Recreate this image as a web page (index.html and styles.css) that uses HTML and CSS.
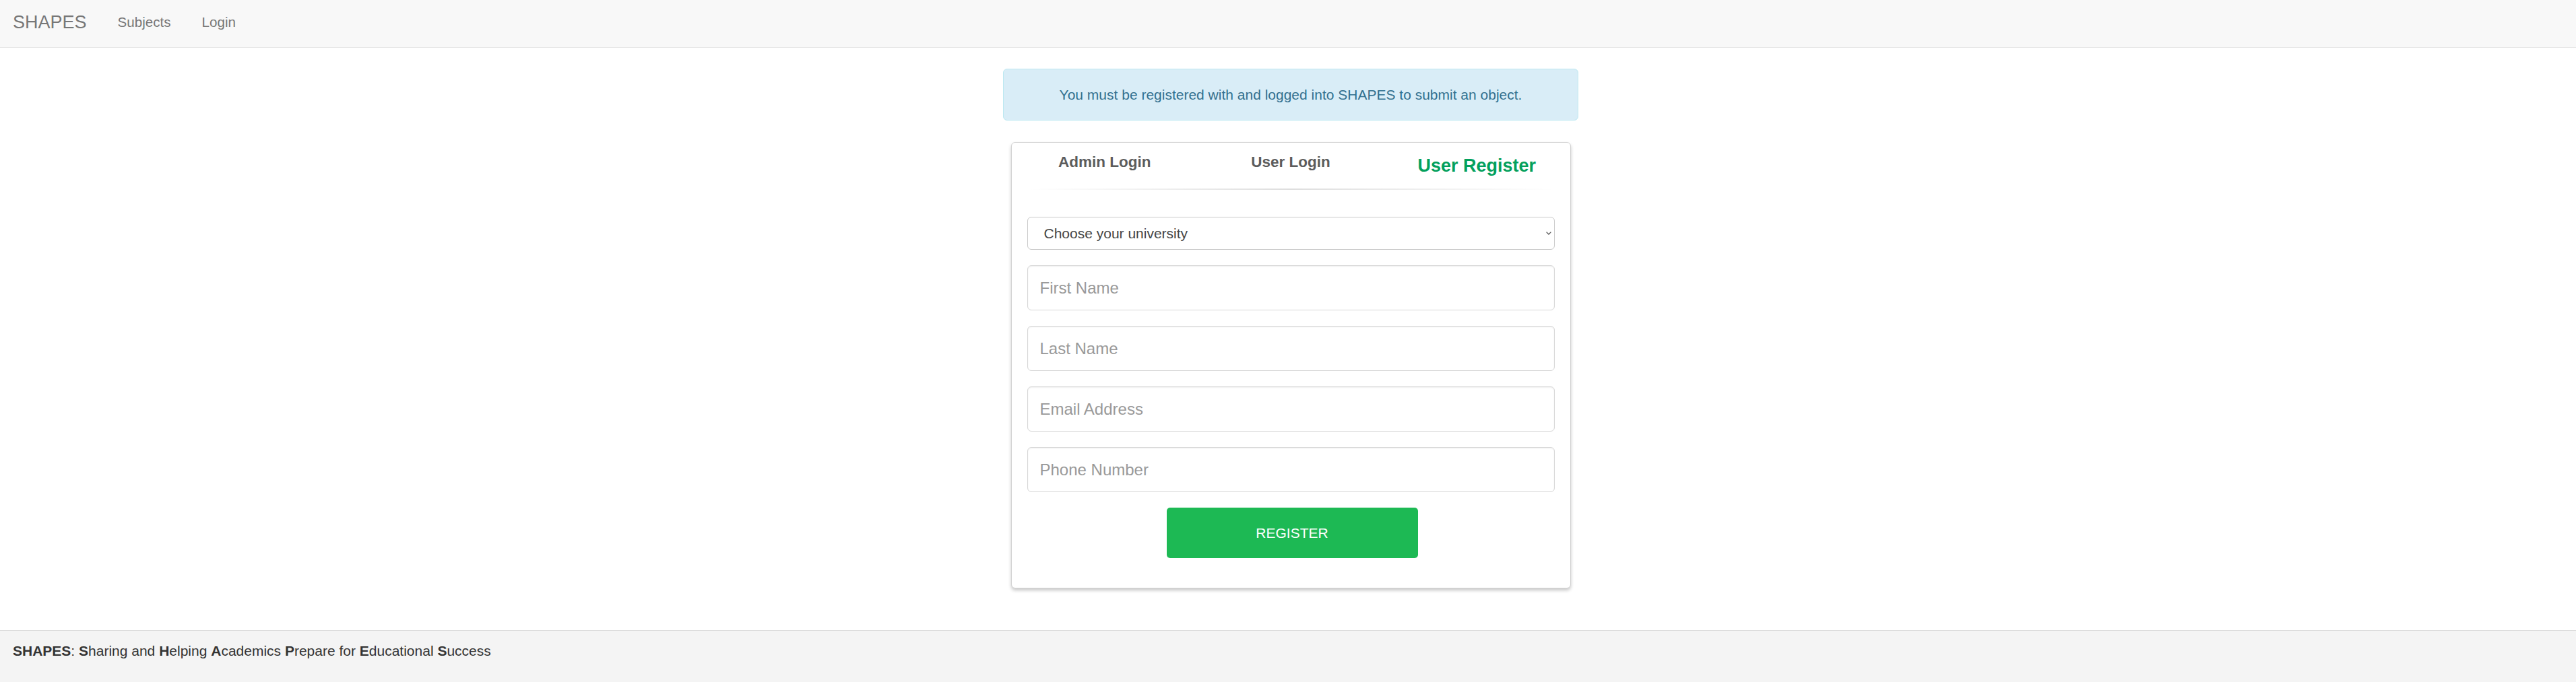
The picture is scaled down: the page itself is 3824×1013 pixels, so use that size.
FILE: index.html
```html
<!DOCTYPE html>
<html lang="en">
<head>
<meta charset="utf-8">
<title>SHAPES - Register</title>
<link rel="stylesheet" href="styles.css">
</head>
<body>
<nav class="navbar">
  <a class="brand" href="#">SHAPES</a>
  <a class="nav-link" href="#">Subjects</a>
  <a class="nav-link" href="#">Login</a>
</nav>
<main class="main">
  <div class="container">
    <div class="alert">You must be registered with and logged into SHAPES to submit an object.</div>
    <div class="card">
      <div class="tabs">
        <div class="tab">Admin Login</div>
        <div class="tab">User Login</div>
        <div class="tab tab-active">User Register</div>
      </div>
      <div class="divider"></div>
      <form class="form">
        <div class="select-wrap">
          <select class="select">
            <option>Choose your university</option>
          </select>
          <svg class="chevron" width="8" height="5" viewBox="0 0 8 5"><path d="M0.6 0.6 L4 4 L7.4 0.6" fill="none" stroke="#555" stroke-width="1.3"/></svg>
        </div>
        <input class="input" type="text" placeholder="First Name">
        <input class="input" type="text" placeholder="Last Name">
        <input class="input" type="email" placeholder="Email Address">
        <input class="input" type="tel" placeholder="Phone Number">
        <button class="btn" type="button">REGISTER</button>
      </form>
    </div>
  </div>
</main>
<footer class="footer">
  <p class="footer-text"><b>SHAPES</b>: <b>S</b>haring and <b>H</b>elping <b>A</b>cademics <b>P</b>repare for <b>E</b>ducational <b>S</b>uccess</p>
</footer>
</body>
</html>
```
FILE: styles.css
```css
html, body {
  margin: 0;
  padding: 0;
}
body {
  font-family: "Liberation Sans", Arial, Helvetica, sans-serif;
  color: #333;
  background: #fff;
  min-height: 100vh;
  display: flex;
  flex-direction: column;
}
.navbar {
  height: 70px;
  background: #f8f8f8;
  border-bottom: 1px solid #e7e7e7;
  display: flex;
  align-items: flex-start;
  gap: 46px;
  padding-left: 19px;
}
.brand {
  font-size: 27px;
  line-height: 66px;
  color: #777;
  text-decoration: none;
}
.nav-link {
  font-size: 20.6px;
  line-height: 66px;
  color: #777;
  text-decoration: none;
}
.main {
  flex: 1;
  padding: 31px 0 0 8px;
}
.container {
  width: 854px;
  margin: 0 auto;
}
.alert {
  height: 75px;
  box-sizing: content-box;
  background: #d9edf7;
  border: 1px solid #bce8f1;
  border-radius: 6px;
  color: #31708f;
  font-size: 21px;
  display: flex;
  align-items: center;
  justify-content: center;
}
.card {
  width: 829px;
  margin: 32px auto 0;
  background: #fff;
  border: 1px solid #d3d3d3;
  border-radius: 6px;
  box-shadow: 0 3px 5px rgba(0, 0, 0, 0.22);
}
.tabs {
  display: flex;
  align-items: flex-start;
  height: 50px;
}
.tab {
  flex: 1;
  text-align: center;
  font-weight: bold;
  font-size: 22.5px;
  line-height: 26px;
  padding-top: 16px;
  color: #5c5c5c;
}
.tab-active {
  font-size: 27px;
  line-height: 31px;
  padding-top: 19px;
  color: #03a05c;
}
.divider {
  height: 2px;
  margin: 18px 23px 0;
  background: linear-gradient(to right, rgba(0,0,0,0), rgba(0,0,0,0.13) 50%, rgba(0,0,0,0));
}
.form {
  display: flex;
  flex-direction: column;
  gap: 23px;
  padding: 40px 23px 44px;
}
.select-wrap {
  position: relative;
  height: 49px;
}
.select {
  appearance: none;
  -webkit-appearance: none;
  width: 100%;
  height: 49px;
  box-sizing: border-box;
  border: 1px solid #c9c9c9;
  border-radius: 6px;
  background: #fff;
  font-family: "Liberation Sans", Arial, Helvetica, sans-serif;
  font-size: 21px;
  color: #444;
  padding: 0 0 0 24px;
  margin: 0;
}
.chevron {
  position: absolute;
  right: 5px;
  top: 22px;
}
.input {
  height: 67px;
  box-sizing: border-box;
  border: 1px solid #d6d6d6;
  border-radius: 6px;
  box-shadow: inset 0 1px 2px rgba(0, 0, 0, 0.07);
  font-family: "Liberation Sans", Arial, Helvetica, sans-serif;
  font-size: 24px;
  padding: 0 18px;
  margin: 0;
  color: #555;
}
.input::placeholder {
  color: #999;
}
.btn {
  align-self: center;
  width: 373px;
  height: 75px;
  margin-left: 4px;
  border: none;
  border-radius: 5px;
  background: #1db954;
  color: #fff;
  font-family: "Liberation Sans", Arial, Helvetica, sans-serif;
  font-size: 21px;
  padding: 0;
}
.footer {
  height: 58px;
  box-sizing: content-box;
  border-top: 1px solid #ddd;
  background: #f4f4f4;
  padding: 18px 0 0 19px;
}
.footer-text {
  margin: 0;
  font-size: 21px;
  line-height: 24px;
  color: #333;
}
```
